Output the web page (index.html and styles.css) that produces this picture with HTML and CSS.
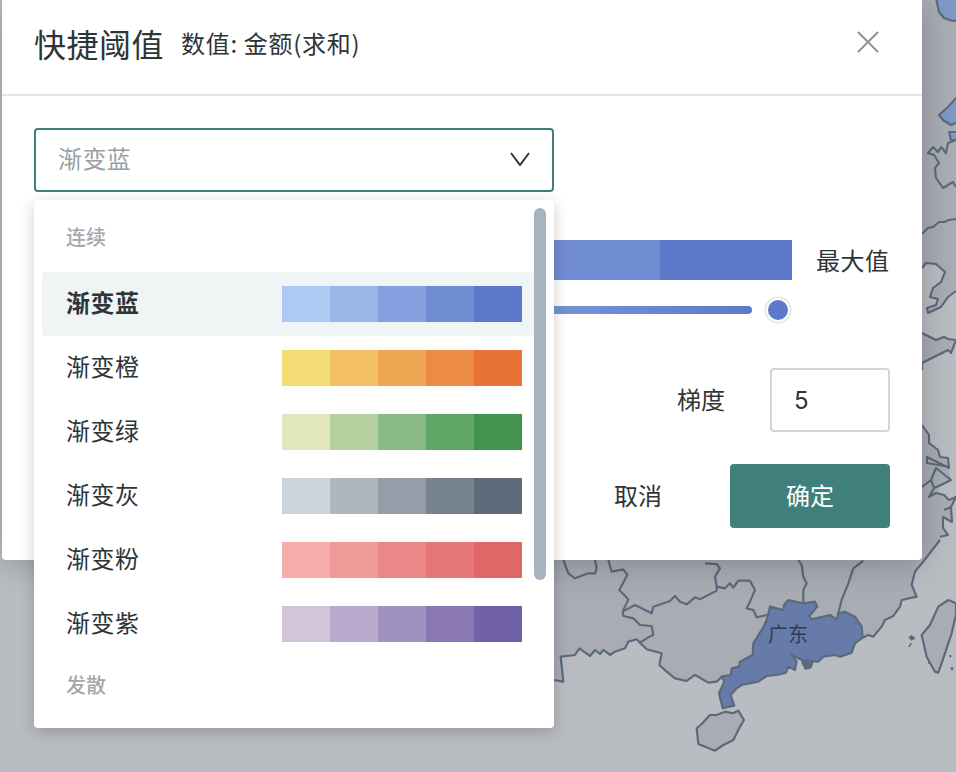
FILE: index.html
```html
<!DOCTYPE html>
<html lang="zh">
<head>
<meta charset="utf-8">
<title>快捷阈值</title>
<link rel="stylesheet" href="styles.css">
</head>
<body>
<div class="stage">
  <svg class="map" viewBox="0 0 956 772" aria-hidden="true">
    <path class="land" d="M900,0 L956,0 L956,291 L948,297 L941,307 L928,313 L927,308 L936,305 L938,299 L930,297 L933,288 L941,282 L945,272 L936,264 L926,263 L922,268 L900,268 Z"/>
    <path class="land" d="M900,333 L922,333 L936,340 L944,337 L948,339 L956,340 L951,353 L948,350 L922,363 L900,372 Z"/>
    <path class="land" d="M900,425 L922,425 L929,435 L929,443 L938,450 L940,457 L948,458 L949,468 L951,480 L941,485 L936,493 L944,495 L949,500 L956,497 L951,507 L952,522 L943,517 L943,528 L948,535 L939,537 L936,545 L931,547 L924,557 L923,563 L900,563 Z"/>
    <path class="region blue" d="M936,-2 L939,12 L944,18 L953,21 L958,20 L958,-2 Z"/>
    <path class="region blue" d="M958,96 L948,107 L939,115 L943,120 L951,125 L958,122 Z"/>
    <path class="region blue" d="M958,132 L949,132 L951,140 L958,140 Z"/>
    <path class="border" d="M956,140 L948,143 L946,153 L941,147 L938,152 L933,147 L928,153 L934,155 L939,163 L935,168 L936,178 L943,188 L953,182 L956,187"/>
    <path class="border" d="M922,234 L928,228 L933,227 L939,222 L944,222 L949,220 L956,219"/>
    <path class="border" d="M922,268 L926,263 L936,264 L945,272 L941,282 L933,288 L930,297 L938,299 L936,305 L927,308 L928,313 L941,307 L948,297 L956,291"/>
    <path class="border" d="M922,333 L936,340 L944,337 L948,339 L956,340 L951,353 L948,350 L922,363 L922,370"/>
    <path class="border" d="M922,425 L929,435 L929,443 L938,450 L940,457 L948,458 L949,468 L927,457 L927,463 L950,467"/>
    <path class="border" d="M936,468 L951,480 L941,485 L934,488 L931,480 Z M931,480 L922,487 M934,488 L929,497 L936,493 L944,495 L949,500 L956,497 L951,507 L944,510 M951,507 L952,522 L943,517 L943,528 L948,535 L939,537 L936,545 L931,547 L924,557"/>
    <g transform="translate(540 540) scale(.3333)">
      <path class="land" d="M42,-60 L42,420 L70,425 L62,350 L105,345 L118,325 L150,348 L165,330 L180,342 L190,330 L210,345 L225,335 L255,325 L265,305 L290,298 L320,328 L365,340 L358,375 L380,395 L405,415 L440,423 L465,405 L505,428 L530,425 L545,410 L968,293 L985,285 L1000,290 L1025,260 L1035,240 L1060,228 L1080,200 L1085,180 L1130,170 L1115,135 L1125,95 L1150,65 L1200,0 L1200,-60 Z"/>
      <path class="land border-land" d="M470,565 L485,552 L510,525 L530,525 L555,515 L578,520 L595,512 L612,540 L600,560 L580,600 L550,615 L525,632 L475,612 Z"/>
      <path class="land border-land" d="M1225,180 L1195,200 L1170,255 L1145,285 L1160,350 L1185,395 L1195,398 L1215,340 L1235,280 L1248,225 L1248,190 Z"/>
      <path class="border thick" d="M248,215 L285,195 L335,220 L340,200 L390,183 L405,168 L420,185 L440,193 L465,172 L480,178 L530,152 L530,140 L555,145 L570,130 L580,143 L595,122 L630,122 L645,150 L630,185 L620,205 L640,210 L650,232 L680,225"/>
      <path class="border thick" d="M248,215 L250,228 L280,235 L300,255 L335,258 L340,285 L325,292 L300,308 L320,328 L365,340 L358,375 L380,395 L405,415 L440,423 L465,405 L505,428 L530,425 L545,410"/>
      <path class="border thick" d="M42,420 L70,425 L62,350 L105,345 L118,325 L150,348 L165,330 L180,342 L190,330 L210,345 L225,335 L255,325 L265,305 L290,298 L300,308"/>
      <path class="border thick" d="M70,60 L85,100 L105,115 L145,100 L165,100 L170,85 L165,60"/>
      <path class="border thick" d="M205,60 L215,95 L250,88 L262,105 L238,150 L265,178 L248,215"/>
      <path class="border thick" d="M495,70 L530,72 L540,85 L525,110 L530,140"/>
      <path class="border thick" d="M775,60 L785,75 L790,110 L800,130 L790,150 L790,190"/>
      <path class="border thick" d="M970,62 L940,85 L925,130 L905,180 L895,220"/>
      <path class="border thick" d="M968,293 L985,285 L1000,290 L1025,260 L1035,240 L1060,228 L1080,200 L1085,180 L1130,170 L1115,135 L1125,95 L1150,65 L1200,0"/>
      <path class="region guangdong thick" d="M548,505 L583,497 L572,465 L590,445 L605,435 L655,425 L680,408 L720,403 L738,398 L745,380 L765,390 L770,365 L755,343 L775,355 L790,362 L835,365 L850,350 L885,345 L900,350 L935,338 L945,310 L968,293 L965,260 L945,230 L915,215 L895,220 L890,238 L870,225 L815,238 L808,228 L832,200 L825,185 L790,190 L745,180 L732,195 L730,210 L690,200 L680,240 L668,265 L640,310 L638,345 L600,365 L598,380 L575,385 L572,405 L545,410 L553,425 L537,460 Z"/>
      <path class="hk" d="M783,365 L800,358 L822,360 L815,385 L795,390 Z"/>
      <path class="hk" d="M1105,292 L1115,285 L1127,295 L1115,302 Z M1105,320 L1112,308 L1116,310 L1110,322 Z M1228,345 L1234,345 L1234,352 L1228,352 Z M1232,382 L1240,382 L1240,390 L1232,390 Z M1165,365 L1170,365 L1170,372 L1165,372 Z"/>
    </g>
  </svg>
  <span class="map-label">广东</span>

  <section class="modal">
    <header class="modal-head">
      <h1 class="modal-title">快捷阈值</h1>
      <span class="modal-sub">数值: 金额(求和)</span>
      <svg class="close" viewBox="0 0 24 24" aria-hidden="true"><path d="M2 2 L22 22 M22 2 L2 22"/></svg>
    </header>
    <div class="modal-body">
      <div class="select">
        <span class="select-text">渐变蓝</span>
        <svg class="chevron" viewBox="0 0 20 14" aria-hidden="true"><path d="M1 1 L10 13 L19 1"/></svg>
      </div>
      <div class="bar-row">
        <div class="bar"><i></i><i></i><i></i><i></i><i></i></div>
        <span class="bar-label">最大值</span>
      </div>
      <div class="slider-row">
        <div class="track"></div>
        <div class="thumb"></div>
      </div>
      <div class="step-row">
        <span class="step-label">梯度</span>
        <div class="input">5</div>
      </div>
      <div class="actions">
        <button class="btn">取消</button>
        <button class="btn primary">确定</button>
      </div>
    </div>
  </section>

  <div class="dropdown">
    <div class="group">连续</div>
    <div class="item active"><span>渐变蓝</span><div class="swatches blue-set"><i></i><i></i><i></i><i></i><i></i></div></div>
    <div class="item"><span>渐变橙</span><div class="swatches orange-set"><i></i><i></i><i></i><i></i><i></i></div></div>
    <div class="item"><span>渐变绿</span><div class="swatches green-set"><i></i><i></i><i></i><i></i><i></i></div></div>
    <div class="item"><span>渐变灰</span><div class="swatches grey-set"><i></i><i></i><i></i><i></i><i></i></div></div>
    <div class="item"><span>渐变粉</span><div class="swatches pink-set"><i></i><i></i><i></i><i></i><i></i></div></div>
    <div class="item"><span>渐变紫</span><div class="swatches purple-set"><i></i><i></i><i></i><i></i><i></i></div></div>
    <div class="group">发散</div>
    <div class="scrollbar"></div>
  </div>
</div>
</body>
</html>
```
FILE: styles.css
```css
* { box-sizing: border-box; }
html, body { margin: 0; padding: 0; }
body {
  font-family: "Noto Sans CJK SC", "Liberation Sans", sans-serif;
  color: #2f3437;
}
.stage {
  position: relative;
  width: 956px;
  height: 772px;
  overflow: hidden;
  background: #b9bcc1;
}
.map { position: absolute; left: 0; top: 0; width: 956px; height: 772px; }
.land { fill: #a9acb3; }
.border-land { stroke: #5a6a7c; stroke-width: 6.5; stroke-linejoin: round; }
.border { fill: none; stroke: #5a6a7c; stroke-width: 2.1; stroke-linejoin: round; }
.border.thick { stroke-width: 6.5; }
.region { stroke: #5a6a7c; stroke-width: 2.1; stroke-linejoin: round; }
.region.thick { stroke-width: 6.5; }
.blue { fill: #7f99c4; }
.guangdong { fill: #667ba9; }
.hk { fill: #5a6a7c; }
.map-label {
  position: absolute;
  left: 768px;
  top: 620px;
  font-size: 20px;
  line-height: 28px;
  color: #2e3b50;
}

.modal {
  position: absolute;
  left: 2px;
  top: 0;
  width: 920px;
  height: 560px;
  background: #fff;
  border-radius: 0 0 4px 4px;
  box-shadow: 0 4px 32px rgba(0, 0, 0, .22);
}
.modal-head {
  display: flex;
  align-items: center;
  height: 96px;
  padding: 0 42px 8px 32px;
  border-bottom: 2px solid #e1e5ea;
}
.modal-title {
  margin: 0;
  font-size: 32px;
  font-weight: 400;
  line-height: 44px;
  letter-spacing: .5px;
}
.modal-sub {
  margin-left: 17px;
  font-size: 24px;
  line-height: 32px;
  letter-spacing: .7px;
}
.close {
  width: 24px;
  height: 24px;
  margin-left: auto;
  margin-bottom: 2px;
  fill: none;
  stroke: #8e9398;
  stroke-width: 2;
}
.modal-body { padding: 32px; }
.select {
  display: flex;
  align-items: center;
  justify-content: space-between;
  height: 64px;
  width: 520px;
  padding: 0 22px 0 22px;
  border: 2px solid #3f807d;
  border-radius: 4px;
  color: #9a9fa5;
  font-size: 24px;
  letter-spacing: .4px;
}
.select-text { margin-bottom: 5px; }
.chevron {
  width: 20px;
  height: 14px;
  margin-bottom: 3px;
  fill: none;
  stroke: #2f3437;
  stroke-width: 2;
}
.bar-row {
  display: flex;
  align-items: center;
  justify-content: flex-end;
  gap: 24px;
  height: 40px;
  margin-top: 48px;
  font-size: 24px;
}
.bar { display: flex; height: 40px; }
.bar i { width: 132px; }
.bar i:nth-child(1) { background: #abcbf3; }
.bar i:nth-child(2) { background: #98b6e8; }
.bar i:nth-child(3) { background: #85a0de; }
.bar i:nth-child(4) { background: #708cd2; }
.bar i:nth-child(5) { background: #5e79c9; }
.bar-label { width: 74px; letter-spacing: .5px; margin-bottom: 2px; }
.slider-row {
  display: flex;
  align-items: center;
  justify-content: flex-end;
  gap: 14px;
  height: 26px;
  margin-top: 17px;
  padding-right: 100px;
}
.track {
  width: 620px;
  height: 8px;
  border-radius: 4px;
  background: linear-gradient(90deg, #abcbf3, #5e79c9);
}
.thumb {
  width: 24px;
  height: 24px;
  border-radius: 50%;
  background: #5e79c9;
  border: 2px solid #fff;
  box-shadow: 0 0 0 1.5px #dfe3ea;
}
.step-row {
  display: flex;
  align-items: center;
  justify-content: flex-end;
  gap: 45px;
  margin-top: 45px;
  font-size: 24px;
}
.step-label { margin-bottom: 4px; }
.input {
  width: 120px;
  height: 64px;
  padding-left: 22px;
  border: 2px solid #d0d6de;
  border-radius: 4px;
  font-family: "Inter", "Liberation Sans", sans-serif;
  line-height: 61px;
}
.actions {
  display: flex;
  justify-content: flex-end;
  gap: 32px;
  margin-top: 32px;
}
.btn {
  width: 120px;
  height: 64px;
  border: 0;
  padding: 0 0 4px;
  background: transparent;
  color: #2f3437;
  font: inherit;
  font-size: 24px;
}
.btn.primary {
  width: 160px;
  background: #3f807d;
  color: #fff;
  border-radius: 4px;
}

.dropdown {
  position: absolute;
  left: 34px;
  top: 200px;
  width: 520px;
  height: 528px;
  padding: 8px 0 0 8px;
  background: #fff;
  border-radius: 4px;
  box-shadow: 0 4px 16px rgba(0, 0, 0, .2);
}
.group {
  height: 58px;
  margin-bottom: 6px;
  padding-left: 24px;
  color: #a5a8ab;
  font-size: 20px;
  font-weight: 500;
  line-height: 58px;
}
.item {
  display: flex;
  align-items: center;
  justify-content: space-between;
  width: 492px;
  height: 64px;
  padding: 0 12px 0 24px;
  border-radius: 4px;
  font-size: 24px;
  letter-spacing: .5px;
}
.item span { margin-bottom: 5px; }
.item.active { background: #eff4f5; font-weight: 700; }
.swatches { display: flex; height: 36px; }
.swatches i { width: 48px; }
.blue-set i:nth-child(1) { background: #abcbf3; }
.blue-set i:nth-child(2) { background: #98b6e8; }
.blue-set i:nth-child(3) { background: #85a0de; }
.blue-set i:nth-child(4) { background: #708cd2; }
.blue-set i:nth-child(5) { background: #5e79c9; }
.orange-set i:nth-child(1) { background: #f4dc75; }
.orange-set i:nth-child(2) { background: #f2bf62; }
.orange-set i:nth-child(3) { background: #efa653; }
.orange-set i:nth-child(4) { background: #ec8b42; }
.orange-set i:nth-child(5) { background: #e87335; }
.green-set i:nth-child(1) { background: #e2e6bc; }
.green-set i:nth-child(2) { background: #b4d09f; }
.green-set i:nth-child(3) { background: #88bb84; }
.green-set i:nth-child(4) { background: #5ea767; }
.green-set i:nth-child(5) { background: #41934f; }
.grey-set i:nth-child(1) { background: #cdd4db; }
.grey-set i:nth-child(2) { background: #aeb6bf; }
.grey-set i:nth-child(3) { background: #949ea8; }
.grey-set i:nth-child(4) { background: #788390; }
.grey-set i:nth-child(5) { background: #5e6979; }
.pink-set i:nth-child(1) { background: #f4adab; }
.pink-set i:nth-child(2) { background: #f09a98; }
.pink-set i:nth-child(3) { background: #ea8888; }
.pink-set i:nth-child(4) { background: #e57776; }
.pink-set i:nth-child(5) { background: #e06767; }
.purple-set i:nth-child(1) { background: #d0c5d9; }
.purple-set i:nth-child(2) { background: #b9a9cd; }
.purple-set i:nth-child(3) { background: #a092bf; }
.purple-set i:nth-child(4) { background: #8978b4; }
.purple-set i:nth-child(5) { background: #7161a7; }
.scrollbar {
  position: absolute;
  right: 8px;
  top: 8px;
  width: 12px;
  height: 372px;
  border-radius: 6px;
  background: #a6b4c2;
}
```
